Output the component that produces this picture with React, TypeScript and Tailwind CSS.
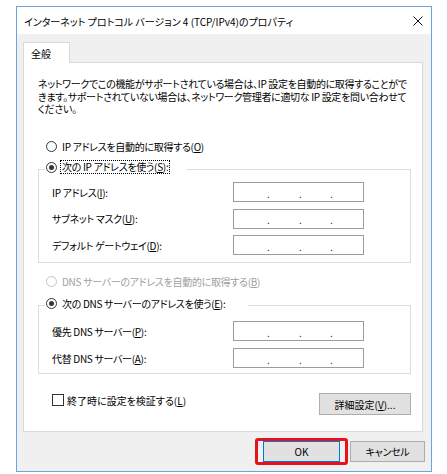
import type { ReactNode } from 'react'

const font = "font-['Noto_Sans_CJK_JP','Noto_Sans',sans-serif] [font-feature-settings:'palt']"

function Key({ k }: { k: string }) {
  return <span className="underline underline-offset-[1px]">{k}</span>
}

function Radio({ checked, disabled, focus, children }: { checked?: boolean; disabled?: boolean; focus?: boolean; children: ReactNode }) {
  return (
    <div className={`flex items-center h-[16px] pl-[1px] ${disabled ? 'text-[#a0a0a0]' : 'text-black'}`}>
      <span
        className={`flex items-center justify-center w-[11px] h-[11px] rounded-full border bg-white ${
          disabled ? 'border-[#c4c4c4]' : 'border-[#333333]'
        }`}
      >
        {checked && <span className="w-[5px] h-[5px] rounded-full bg-[#333333]" />}
      </span>
      {focus ? (
        <span className="ml-[3px] px-[1px] border border-dotted border-black leading-[12px] whitespace-nowrap tracking-[-0.3px]">
          {children}
        </span>
      ) : (
        <span className="ml-[5px] whitespace-nowrap tracking-[-0.3px]">{children}</span>
      )}
    </div>
  )
}

function IpBox() {
  return (
    <div className="w-[131px] h-[20px] border border-[#9c9c9c] bg-white flex items-center pl-[33px] pt-[2px] text-[#1a2a4a]">
      <span className="w-[32px]">.</span>
      <span className="w-[31px]">.</span>
      <span>.</span>
    </div>
  )
}

function Field({ label }: { label: ReactNode }) {
  return (
    <div className="flex items-center h-[20px]">
      <span className="w-[194px] pl-[13px] whitespace-nowrap tracking-[-0.3px]">{label}</span>
      <IpBox />
    </div>
  )
}

function Button({ children, className = '' }: { children: ReactNode; className?: string }) {
  return (
    <div className={`flex items-center justify-center bg-[#e1e1e1] border ${className}`}>{children}</div>
  )
}

export default function App() {
  return (
    <div className={`w-[447px] h-[474px] bg-white pt-[6px] pl-[16px] text-[10px] text-black ${font}`}>
      <div className="w-[416px] h-[466px] border border-[#6aa5dd] flex flex-col">
        {/* title bar */}
        <div className="h-[27px] bg-white flex items-center justify-between pl-[7px] pr-[8px]">
          <span className="whitespace-nowrap pt-[1px]">インターネット プロトコル バージョン 4 (TCP/IPv4)のプロパティ</span>
          <svg width="10" height="10" viewBox="0 0 10 10" className="mt-[1px]">
            <path d="M0.5 0.5 L9.5 9.5 M9.5 0.5 L0.5 9.5" stroke="#111" strokeWidth="1" />
          </svg>
        </div>

        <div className="flex-1 bg-[#f0f0f0] flex flex-col pt-[8px] pl-[6px]">
          {/* tab */}
          <div className="w-[47px] h-[21px] bg-white border-t border-l border-r border-[#d9d9d9] -mb-[1px] relative z-10 pl-[7px] pt-[3px]">
            全般
          </div>

          {/* panel */}
          <div className="w-[400px] h-[370px] bg-white border border-[#d9d9d9] pl-[14px] pt-[15px]">
            <p className="leading-[12.5px] whitespace-nowrap tracking-[-0.33px]">
              ネットワークでこの機能がサポートされている場合は、IP 設定を自動的に取得することがで
              <br />
              きます。サポートされていない場合は、ネットワーク管理者に適切な IP 設定を問い合わせて
              <br />
              ください。
            </p>

            <div className="mt-[22.5px] ml-[7px]">
              <Radio>
                IP アドレスを自動的に取得する(<Key k="O" />)
              </Radio>
            </div>

            <fieldset className="w-[373px] mt-[5px] border border-[#dcdcdc] pt-[3px] pb-[7px] flex flex-col gap-[6.5px]">
              <legend className="ml-[6px] w-[142px] pb-[4px]">
                <Radio checked focus>
                  次の IP アドレスを使う(<Key k="S" />):
                </Radio>
              </legend>
              <Field label={<>IP アドレス(<Key k="I" />):</>} />
              <Field label={<>サブネット マスク(<Key k="U" />):</>} />
              <Field label={<>デフォルト ゲートウェイ(<Key k="D" />):</>} />
            </fieldset>

            <div className="mt-[10px] ml-[7px]">
              <Radio disabled>
                DNS サーバーのアドレスを自動的に取得する(<Key k="B" />)
              </Radio>
            </div>

            <fieldset className="w-[373px] mt-[6px] border border-[#dcdcdc] pt-[6px] pb-[5px] flex flex-col gap-[7px]">
              <legend className="ml-[6px] w-[203px] pb-[4px]">
                <Radio checked>
                  次の DNS サーバーのアドレスを使う(<Key k="E" />):
                </Radio>
              </legend>
              <Field label={<>優先 DNS サーバー(<Key k="P" />):</>} />
              <Field label={<>代替 DNS サーバー(<Key k="A" />):</>} />
            </fieldset>

            <div className="w-[373px] mt-[18px] flex items-start justify-between">
              <label className="flex items-center h-[16px] ml-[14px]">
                <span className="w-[12px] h-[12px] border border-[#333333] bg-white" />
                <span className="ml-[3px] whitespace-nowrap">
                  終了時に設定を検証する(<Key k="L" />)
                </span>
              </label>
              <Button className="mt-[1px] w-[92px] h-[22px] border-[#adadad]">
                詳細設定(<Key k="V" />)...
              </Button>
            </div>
          </div>

          {/* dialog buttons */}
          <div className="mt-[6px] flex items-center justify-end gap-[2px] pr-[6px]">
            <div className="border-[3px] border-[#e8101c] rounded-[3px] px-[5px]">
              <Button className="w-[77px] h-[21px] border-[#0078d7]">OK</Button>
            </div>
            <Button className="w-[75px] h-[21px] border-[#adadad] tracking-[-0.3px]">キャンセル</Button>
          </div>
        </div>
      </div>
    </div>
  )
}
